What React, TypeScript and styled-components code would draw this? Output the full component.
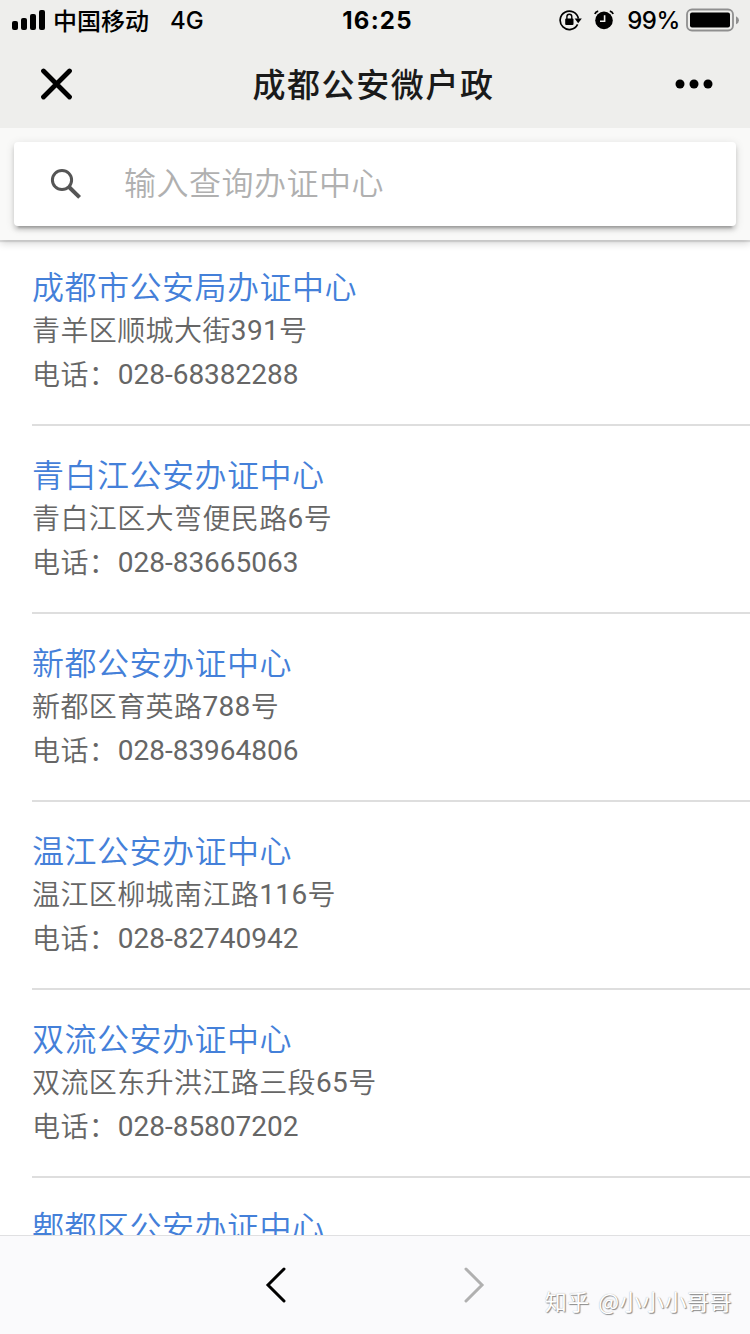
import React from "react";
import styled, { createGlobalStyle } from "styled-components";

const GlobalStyle = createGlobalStyle`
  * { box-sizing: border-box; }
  body { margin: 0; background: #fff; }
  h1, h2, p, ul { margin: 0; padding: 0; font-weight: 400; }
`;

const Screen = styled.div`
  width: 750px;
  height: 1334px;
  display: flex;
  flex-direction: column;
  overflow: hidden;
  background: #fff;
  font-family: Roboto, "Noto Sans CJK SC", sans-serif;
`;

const StatusBar = styled.header`
  flex: none;
  height: 40px;
  display: grid;
  grid-template-columns: 1fr auto 1fr;
  align-items: center;
  padding: 0 11px 0 12px;
  background: #eeeeec;
  color: #000;
  font: 500 24px/40px Inter, "Noto Sans CJK SC", sans-serif;
`;

const StatusGroup = styled.div<{ $end?: boolean }>`
  display: flex;
  align-items: center;
  justify-content: ${(p) => (p.$end ? "flex-end" : "flex-start")};
  svg { flex: none; display: block; }
`;

const Carrier = styled.span`
  margin-left: 7px;
  font: 500 24px/38px "Noto Sans CJK SC", sans-serif;
  padding-bottom: 1px;
`;

const Network = styled.span`
  margin-left: 21px;
  padding-top: 2px;
  line-height: 38px;
  font-size: 24px;
`;

const Clock = styled.span`
  font-weight: 700;
  font-size: 24px;
  line-height: 38px;
  letter-spacing: 1.2px;
  padding: 2px 0 0 4px;
`;

const Percent = styled.span`
  margin: 0 6px 0 13px;
  padding-top: 2px;
  line-height: 38px;
  font-size: 24px;
  letter-spacing: -0.4px;
`;

const LockSlot = styled.span`
  margin-right: 12px;
`;

const NavBar = styled.nav`
  flex: none;
  height: 88px;
  display: flex;
  align-items: center;
  justify-content: space-between;
  padding: 0 36px 0 40px;
  background: #eeeeec;
  svg { display: block; }
`;

const NavTitle = styled.h1`
  margin-bottom: 3px;
  font: 500 33px/48px "Noto Sans CJK SC", sans-serif;
  letter-spacing: 1.6px;
  color: #1a1a1a;
`;

const SearchBar = styled.section`
  flex: none;
  position: relative;
  height: 112px;
  padding: 14px;
  background: #f9f9f8;
  box-shadow: 0 2px 1px rgba(0, 0, 0, 0.1), 0 3px 8px rgba(0, 0, 0, 0.18);
  clip-path: inset(0 0 -16px 0);
`;

const SearchField = styled.div`
  height: 84px;
  display: flex;
  align-items: center;
  padding-left: 36px;
  border-radius: 4px;
  background: #fff;
  box-shadow: 0 4px 4px rgba(0, 0, 0, 0.14), 0 6px 2px -4px rgba(0, 0, 0, 0.2),
    0 2px 10px rgba(0, 0, 0, 0.12);
`;

const Placeholder = styled.span`
  margin: 0 0 7px 42px;
  font: 350 32px/48px "Noto Sans CJK SC", sans-serif;
  letter-spacing: 0.5px;
  color: #b0b0b0;
`;

const List = styled.ul`
  flex: 1;
  min-height: 0;
  overflow: hidden;
  list-style: none;
  padding-left: 32px;
`;

const Item = styled.li`
  height: 188px;
  padding-top: 25px;
  border-bottom: 2px solid #dedede;
  white-space: nowrap;

  &:first-child {
    height: 186px;
    padding-top: 23px;
  }
`;

const CenterName = styled.h2`
  font: 350 32px/44px "Noto Sans CJK SC", sans-serif;
  letter-spacing: 0.5px;
  color: #4480d9;
`;

const Detail = styled.p`
  height: 44px;
  font: 350 28px/44px "Noto Sans CJK SC", sans-serif;
  letter-spacing: 0.4px;
  color: #666;
`;

const Digits = styled.span<{ $phone?: boolean }>`
  font: 400 28px/28px Roboto, sans-serif;
  vertical-align: 1px;
  letter-spacing: ${(p) => (p.$phone ? "0" : "0.35px")};
  margin-left: ${(p) => (p.$phone ? "0.5px" : "0")};
`;

const Toolbar = styled.footer`
  flex: none;
  position: relative;
  height: 99px;
  display: flex;
  justify-content: center;
  align-items: center;
  gap: 176px;
  border-top: 1px solid #e0e0e2;
  background: #fafafc;
  svg { display: block; }
`;

const Watermark = styled.span`
  position: absolute;
  right: 18px;
  bottom: 18px;
  font: 400 22px/32px "Noto Sans CJK SC", sans-serif;
  word-spacing: 3px;
  letter-spacing: 0.5px;
  color: #fff;
  text-shadow: 1px 1px 1px #888, 0 0 1px #aaa;
  white-space: nowrap;
`;

const Signal = () => (
  <svg width="34" height="22" viewBox="0 0 34 22">
    <rect x="0" y="12" width="6" height="9" rx="2" />
    <rect x="9" y="9" width="6" height="12" rx="2" />
    <rect x="18" y="5" width="6" height="16" rx="2" />
    <rect x="27" y="1" width="6" height="20" rx="2" />
  </svg>
);

const RotationLock = () => (
  <svg width="23" height="22" viewBox="0 0 23 22">
    <path d="M18.6 15.4A9.2 9.2 0 1 1 19.4 9.6" fill="none" stroke="#000" strokeWidth="1.7" />
    <path d="M15.6 9.4h7.2l-3.6 4.8z" />
    <rect x="6.2" y="9.4" width="8.3" height="6.6" rx="1" />
    <path d="M7.9 10V7.7a2.45 2.45 0 0 1 4.9 0V10" fill="none" stroke="#000" strokeWidth="1.4" />
  </svg>
);

const Alarm = () => (
  <svg width="20" height="20" viewBox="0 0 20 20">
    <circle cx="10" cy="10.4" r="8.8" />
    <path d="M10.6 5.2v6H6" fill="none" stroke="#eeeeec" strokeWidth="1.6" />
    <path d="M0.9 4Q1.6 1.6 4.2 1.1M19.1 4Q18.4 1.6 15.8 1.1" fill="none" stroke="#000" strokeWidth="1.8" />
  </svg>
);

const Battery = () => (
  <svg width="53" height="24" viewBox="0 0 53 24">
    <rect x="1" y="1.5" width="46" height="21" rx="5" fill="none" stroke="#8f8f8f" strokeWidth="1.8" />
    <rect x="4" y="4.5" width="40" height="15" rx="2" />
    <path d="M50 8.2q3 1.4 3 4t-3 4z" fill="#8f8f8f" />
  </svg>
);

type Center = { name: string; street?: string; number?: string; phone?: string };

const centers: Center[] = [
  { name: "成都市公安局办证中心", street: "青羊区顺城大街", number: "391", phone: "028-68382288" },
  { name: "青白江公安办证中心", street: "青白江区大弯便民路", number: "6", phone: "028-83665063" },
  { name: "新都公安办证中心", street: "新都区育英路", number: "788", phone: "028-83964806" },
  { name: "温江公安办证中心", street: "温江区柳城南江路", number: "116", phone: "028-82740942" },
  { name: "双流公安办证中心", street: "双流区东升洪江路三段", number: "65", phone: "028-85807202" },
  { name: "郫都区公安办证中心" },
];

export default function App() {
  return (
    <>
      <GlobalStyle />
      <Screen>
        <StatusBar>
          <StatusGroup>
            <Signal />
            <Carrier>中国移动</Carrier>
            <Network>4G</Network>
          </StatusGroup>
          <Clock>16:25</Clock>
          <StatusGroup $end>
            <LockSlot>
              <RotationLock />
            </LockSlot>
            <Alarm />
            <Percent>99%</Percent>
            <Battery />
          </StatusGroup>
        </StatusBar>
        <NavBar>
          <svg width="33" height="32" viewBox="0 0 33 32">
            <path d="M3.5 3l26 26M29.5 3l-26 26" stroke="#000" strokeWidth="4.8" strokeLinecap="round" />
          </svg>
          <NavTitle>成都公安微户政</NavTitle>
          <svg width="40" height="12" viewBox="0 0 40 12">
            <circle cx="6" cy="6" r="4.5" />
            <circle cx="20" cy="6" r="4.5" />
            <circle cx="34" cy="6" r="4.5" />
          </svg>
        </NavBar>
        <SearchBar>
          <SearchField>
            <svg width="32" height="32" viewBox="0 0 32 32" fill="none" stroke="#555">
              <circle cx="12" cy="12" r="9.6" strokeWidth="3" />
              <path d="M19 19l10.6 10.4" strokeWidth="4" />
            </svg>
            <Placeholder>输入查询办证中心</Placeholder>
          </SearchField>
        </SearchBar>
        <List>
          {centers.map(({ name, street, number, phone }) => (
            <Item key={name}>
              <CenterName>{name}</CenterName>
              {street && (
                <Detail>
                  {street}
                  <Digits>{number}</Digits>号
                </Detail>
              )}
              {phone && (
                <Detail>
                  电话：<Digits $phone>{phone}</Digits>
                </Detail>
              )}
            </Item>
          ))}
        </List>
        <Toolbar>
          <svg width="22" height="36" viewBox="0 0 22 36" fill="none" stroke="#000" strokeWidth="3" strokeLinecap="round">
            <path d="M19 2L3 18l16 16" />
          </svg>
          <svg width="22" height="36" viewBox="0 0 22 36" fill="none" stroke="#b0b0b0" strokeWidth="3" strokeLinecap="round">
            <path d="M3 2l16 16L3 34" />
          </svg>
          <Watermark>知乎 @小小小哥哥</Watermark>
        </Toolbar>
      </Screen>
    </>
  );
}
